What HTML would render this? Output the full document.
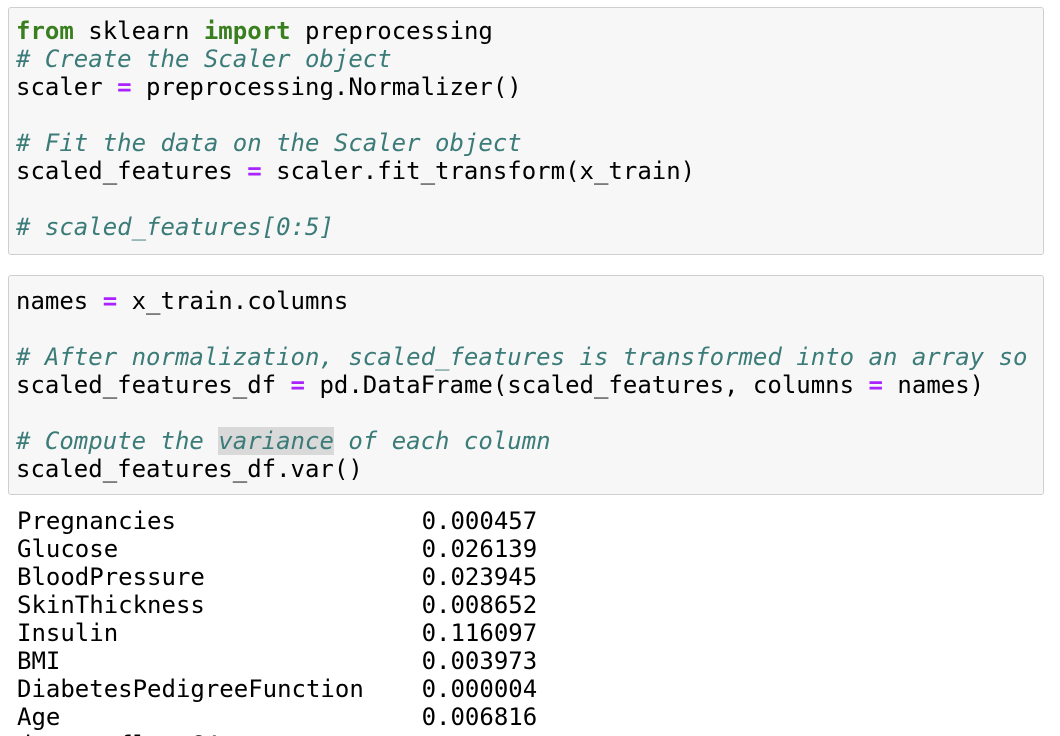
<!DOCTYPE html>
<html style="height:736px;overflow:hidden;"><head><style>
html,body{margin:0;background:#fff;width:1060px;height:736px;overflow:hidden;}
body{position:relative;font-family:"DejaVu Sans Mono","Liberation Mono",monospace;font-size:24px;}
.cell{position:absolute;left:8px;width:1034px;background:#f7f7f7;border:1px solid #cfcfcf;border-radius:3px;overflow:hidden;}
pre{margin:0;font:inherit;line-height:28px;white-space:pre;color:#000;}
.k{font-weight:bold;color:#3a7f1f}
.c{color:#3b7b78;font-style:italic}
.o{color:#aa22ff;font-weight:bold}
.h{background:#d9d9d9}
</style></head><body>
<div class="cell" style="top:7px;height:246px;"><pre style="position:absolute;left:7px;top:9px;"><span class="k">from</span> sklearn <span class="k">import</span> preprocessing
<span class="c"># Create the Scaler object</span>
scaler <span class="o">=</span> preprocessing.Normalizer()

<span class="c"># Fit the data on the Scaler object</span>
scaled_features <span class="o">=</span> scaler.fit_transform(x_train)

<span class="c"># scaled_features[0:5]</span></pre></div>
<div class="cell" style="top:275px;height:218px;"><pre style="position:absolute;left:7px;top:11px;">names <span class="o">=</span> x_train.columns

<span class="c"># After normalization, scaled_features is transformed into an array so</span>
scaled_features_df <span class="o">=</span> pd.DataFrame(scaled_features, columns <span class="o">=</span> names)

<span class="c"># Compute the <span class="h">variance</span> of each column</span>
scaled_features_df.var()</pre></div>
<pre style="position:absolute;left:17px;top:507px;">Pregnancies                 0.000457
Glucose                     0.026139
BloodPressure               0.023945
SkinThickness               0.008652
Insulin                     0.116097
BMI                         0.003973
DiabetesPedigreeFunction    0.000004
Age                         0.006816
dtype: float64</pre>
</body></html>
